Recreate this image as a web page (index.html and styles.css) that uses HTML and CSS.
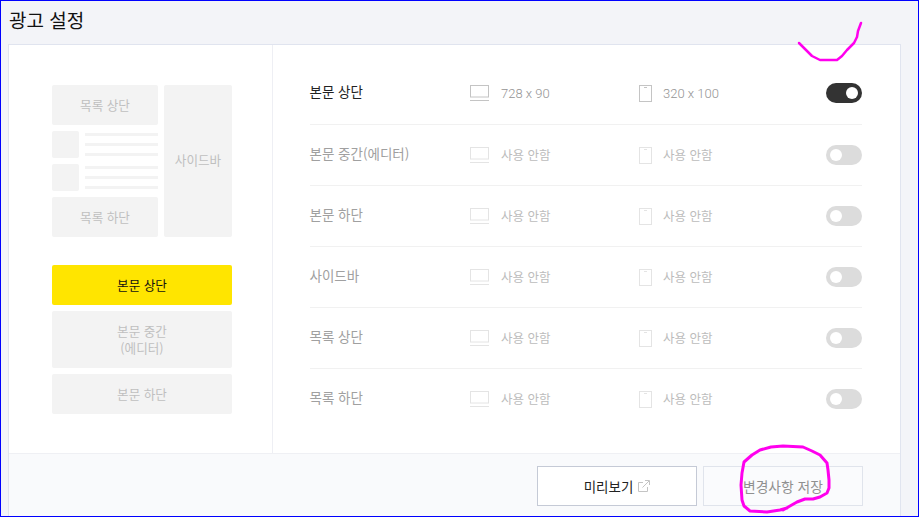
FILE: index.html
```html
<!DOCTYPE html>
<html lang="ko">
<head>
<meta charset="utf-8">
<title>광고 설정</title>
<link rel="stylesheet" href="styles.css">
</head>
<body>
<div class="frame">
  <h1 class="title">광고 설정</h1>
  <section class="card">
    <div class="main">
      <aside class="side">
        <div class="layout">
          <div class="layout-col">
            <div class="box box-40">목록 상단</div>
            <div class="item"><div class="thumb"></div><div class="lines"><i></i><i></i><i></i></div></div>
            <div class="item"><div class="thumb"></div><div class="lines"><i></i><i></i><i></i></div></div>
            <div class="box box-40">목록 하단</div>
          </div>
          <div class="box box-side">사이드바</div>
        </div>
        <div class="slots">
          <div class="box box-40 box-on">본문 상단</div>
          <div class="box box-57">본문 중간<br>(에디터)</div>
          <div class="box box-40">본문 하단</div>
        </div>
      </aside>
      <div class="rows">
        <div class="row row-on">
          <div class="name">본문 상단</div>
          <svg class="pc" viewBox="0 0 19 16"><rect x="0.5" y="0.5" width="18" height="11.5"/><path d="M0 15.5h19"/></svg>
          <div class="size">728 x 90</div>
          <svg class="mo" viewBox="0 0 13 17"><rect x="0.5" y="0.5" width="12" height="16"/><path d="M5 2.5h3"/></svg>
          <div class="size">320 x 100</div>
          <div class="toggle toggle-on"><b></b></div>
        </div>
        <div class="row">
          <div class="name">본문 중간(에디터)</div>
          <svg class="pc" viewBox="0 0 19 16"><rect x="0.5" y="0.5" width="18" height="11.5"/><path d="M0 15.5h19"/></svg>
          <div class="size">사용 안함</div>
          <svg class="mo" viewBox="0 0 13 17"><rect x="0.5" y="0.5" width="12" height="16"/><path d="M5 2.5h3"/></svg>
          <div class="size">사용 안함</div>
          <div class="toggle"><b></b></div>
        </div>
        <div class="row">
          <div class="name">본문 하단</div>
          <svg class="pc" viewBox="0 0 19 16"><rect x="0.5" y="0.5" width="18" height="11.5"/><path d="M0 15.5h19"/></svg>
          <div class="size">사용 안함</div>
          <svg class="mo" viewBox="0 0 13 17"><rect x="0.5" y="0.5" width="12" height="16"/><path d="M5 2.5h3"/></svg>
          <div class="size">사용 안함</div>
          <div class="toggle"><b></b></div>
        </div>
        <div class="row">
          <div class="name">사이드바</div>
          <svg class="pc" viewBox="0 0 19 16"><rect x="0.5" y="0.5" width="18" height="11.5"/><path d="M0 15.5h19"/></svg>
          <div class="size">사용 안함</div>
          <svg class="mo" viewBox="0 0 13 17"><rect x="0.5" y="0.5" width="12" height="16"/><path d="M5 2.5h3"/></svg>
          <div class="size">사용 안함</div>
          <div class="toggle"><b></b></div>
        </div>
        <div class="row">
          <div class="name">목록 상단</div>
          <svg class="pc" viewBox="0 0 19 16"><rect x="0.5" y="0.5" width="18" height="11.5"/><path d="M0 15.5h19"/></svg>
          <div class="size">사용 안함</div>
          <svg class="mo" viewBox="0 0 13 17"><rect x="0.5" y="0.5" width="12" height="16"/><path d="M5 2.5h3"/></svg>
          <div class="size">사용 안함</div>
          <div class="toggle"><b></b></div>
        </div>
        <div class="row row-last">
          <div class="name">목록 하단</div>
          <svg class="pc" viewBox="0 0 19 16"><rect x="0.5" y="0.5" width="18" height="11.5"/><path d="M0 15.5h19"/></svg>
          <div class="size">사용 안함</div>
          <svg class="mo" viewBox="0 0 13 17"><rect x="0.5" y="0.5" width="12" height="16"/><path d="M5 2.5h3"/></svg>
          <div class="size">사용 안함</div>
          <div class="toggle"><b></b></div>
        </div>
      </div>
    </div>
    <footer class="foot">
      <button class="btn btn-preview">미리보기<svg class="ext" viewBox="0 0 12 12"><path d="M5 2.5H0.5v9h9V7M4.5 7.5L11 1M7 0.5h4.5V5"/></svg></button>
      <button class="btn btn-save">변경사항 저장</button>
    </footer>
  </section>
  <svg class="scribble" viewBox="0 0 919 517">
    <path class="thin" d="M799 43L806 50L812 56L820 60L837 60L842 56L847 50L854 43L857 37L858 31L861 23"/>
    <path d="M787 508L780 510L767 512L750 511L744 506L742 500L741 485L742 473L744 462L752 455L760 450L771 447L783 446L803 447L812 451L820 455L827 463L828 470L829 480L829 488L827 493L820 497L813 499L805 499L797 502L790 506L783 510"/>
  </svg>
</div>
</body>
</html>
```
FILE: styles.css
```css
* { box-sizing: border-box; }
html, body { margin: 0; padding: 0; }
body {
  width: 919px;
  height: 517px;
  overflow: hidden;
  font-family: "Noto Sans CJK KR", "Noto Sans", sans-serif;
}
.frame {
  position: relative;
  width: 919px;
  height: 517px;
  border: 1px solid #0000ff;
  background: #f3f4f8;
  padding-left: 7px;
  padding-right: 17px;
  overflow: hidden;
}
.title {
  margin: 0 0 0 1px;
  height: 43px;
  padding-top: 5px;
  font-size: 19px;
  line-height: 27px;
  font-weight: 400;
  color: #111;
}
.card {
  height: 473px;
  border: 1px solid #e0e4ef;
  border-bottom: 0;
  background: #fff;
}
.main {
  display: flex;
  height: 408px;
}
.side {
  width: 264px;
  flex: none;
  border-right: 1px solid #eeeff4;
  padding: 40px 0 0 43px;
}
.layout {
  display: flex;
  gap: 6px;
  width: 180px;
  height: 152px;
}
.layout-col {
  display: flex;
  flex-direction: column;
  gap: 6px;
  width: 106px;
}
.box {
  display: flex;
  align-items: center;
  justify-content: center;
  text-align: center;
  background: #f3f3f3;
  border-radius: 2px;
  color: #bfbfbf;
  font-size: 12.6px;
  line-height: 17px;
  padding-bottom: 2px;
}
.box-40 { height: 40px; flex: none; }
.box-57 { height: 57px; }
.box-side { width: 68px; padding-bottom: 4px; }
.box-on { background: #ffe500; color: #111; }
.item {
  display: flex;
  gap: 6px;
  height: 27px;
}
.thumb {
  width: 27px;
  background: #f3f3f3;
  border-radius: 2px;
}
.lines {
  flex: 1;
  display: flex;
  flex-direction: column;
  gap: 7px;
  padding-top: 2px;
}
.lines i {
  display: block;
  height: 3px;
  background: #f3f3f3;
}
.slots {
  display: flex;
  flex-direction: column;
  gap: 6px;
  width: 180px;
  margin-top: 28px;
}
.rows {
  width: 552px;
  margin-left: 37px;
  padding-top: 18px;
}
.row {
  display: flex;
  align-items: center;
  height: 61px;
  border-bottom: 1px solid #f1f1f1;
  font-size: 12.5px;
  color: #bcbcbc;
}
.row-on {
  height: 62px;
  padding-bottom: 1px;
}
.row-last {
  border-bottom: 0;
  padding-bottom: 1px;
}
.name {
  width: 160px;
  font-size: 13.5px;
  color: #a0a0a0;
  margin-left: -0.5px;
  padding-bottom: 4px;
}
.row-on .name { color: #222; }
.size {
  color: #bcbcbc;
  width: 138px;
  padding-bottom: 2px;
}
.size + .mo + .size { width: 163px; }
.row-on .size {
  color: #949494;
  font-family: Roboto, "Noto Sans CJK KR", sans-serif;
  font-size: 13px;
  font-weight: 300;
  padding-bottom: 0;
}
.pc { width: 19px; height: 16px; margin-right: 12.5px; flex: none; }
.mo { width: 13px; height: 17px; margin-right: 11px; flex: none; }
.pc rect, .mo rect, .pc path, .mo path {
  fill: none;
  stroke: #e4e4e4;
  stroke-width: 1;
}
.row-on .pc rect, .row-on .mo rect, .row-on .pc path, .row-on .mo path { stroke: #c4c4c4; }
.toggle {
  width: 36px;
  height: 20px;
  flex: none;
  border-radius: 10px;
  background: #dcdcdc;
  padding: 4px;
  display: flex;
}
.toggle b {
  display: block;
  width: 12px;
  height: 12px;
  border-radius: 50%;
  background: #fff;
}
.toggle-on { background: #333; justify-content: flex-end; }
.foot {
  display: flex;
  justify-content: flex-end;
  gap: 6px;
  height: 64px;
  padding: 12px 37px 0 0;
  background: #f9fafc;
  border-top: 1px solid #eff0f4;
}
.btn {
  width: 160px;
  height: 40px;
  font: inherit;
  font-size: 13.5px;
  display: flex;
  align-items: center;
  justify-content: center;
  padding: 0;
}
.btn-preview {
  background: #fff;
  border: 1px solid #c5cad6;
  color: #222;
}
.btn-save {
  background: #fafbfd;
  border: 1px solid #e0e4ec;
  color: #909090;
  font-size: 13.8px;
}
.ext {
  width: 12px;
  height: 12px;
  margin-left: 5px;
  fill: none;
  stroke: #c4c4c4;
  stroke-width: 1;
}
.scribble {
  position: absolute;
  left: -1px;
  top: -1px;
  width: 919px;
  height: 517px;
  pointer-events: none;
}
.scribble path {
  fill: none;
  stroke: #ff00ee;
  stroke-width: 3;
  stroke-linejoin: round;
  stroke-linecap: round;
}
.scribble .thin { stroke-width: 2.5; }
```
